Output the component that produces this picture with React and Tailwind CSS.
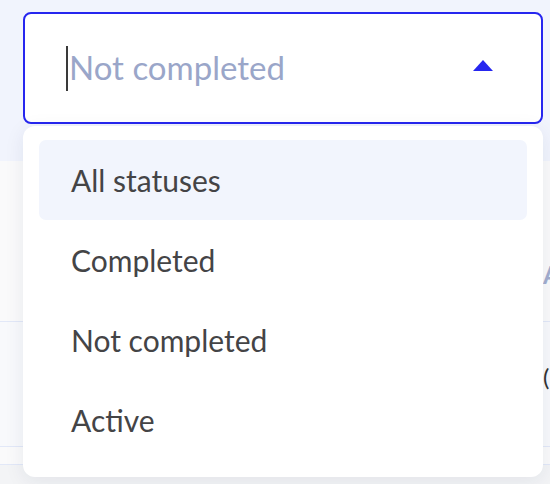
import React from 'react';

const options = ['All statuses', 'Completed', 'Not completed', 'Active'];

const StatusFilter = () => {
  return (
    <div className="relative w-[550px] h-[484px] overflow-hidden bg-[#f3f4f6] font-['Lato',sans-serif]">
      {/* filter bar */}
      <div className="h-[161px] bg-[#f1f4fd] px-[23px] pt-[12px]">
        <div className="h-[112px] w-[520px] rounded-[8px] border-2 border-[#2626ef] bg-white flex items-center pl-[41px] pr-[48px]">
          <span className="w-[2px] h-[45px] bg-[#3a3a3a] mr-[1px]" />
          <span className="flex-1 text-[33px] text-[#9aa6c9] leading-none pb-[2px]">Not completed</span>
          <svg width="20" height="11" viewBox="0 0 20 11" className="mb-[6px]">
            <path d="M10 0 L20 11 L0 11 Z" fill="#2626ef" />
          </svg>
        </div>
      </div>

      {/* table behind the menu */}
      <div className="bg-white">
        <div className="h-[161px] bg-[#fafafb] border-b border-[#e2e8f8] flex items-center pl-[543px] pt-[68px]">
          <span className="text-[24px] font-bold text-[#a3aecf] whitespace-nowrap">Assigned</span>
        </div>
        <div className="h-[125px] bg-[#f8f9fc] border-b border-[#e2e8f8] flex items-center pl-[543px] pb-[14px]">
          <span className="text-[24px] text-[#333] whitespace-nowrap">(3)</span>
        </div>
        <div className="h-[18px] bg-[#fafafb] border-b border-[#e2e8f8]" />
      </div>

      {/* dropdown menu */}
      <div className="absolute left-[23px] top-[126px] w-[520px] rounded-[12px] bg-white shadow-[0_4px_20px_rgba(30,40,80,0.08)] px-[16px] pt-[14px] pb-[17px]">
        {options.map((opt, i) => (
          <div
            key={opt}
            className={`h-[80px] flex items-center pl-[32px] rounded-[7px] text-[30px] text-[#444446] ${i === 0 ? 'bg-[#f2f5fd]' : ''}`}
          >
            {opt}
          </div>
        ))}
      </div>
    </div>
  );
};

export default function App() {
  return <StatusFilter />;
}
